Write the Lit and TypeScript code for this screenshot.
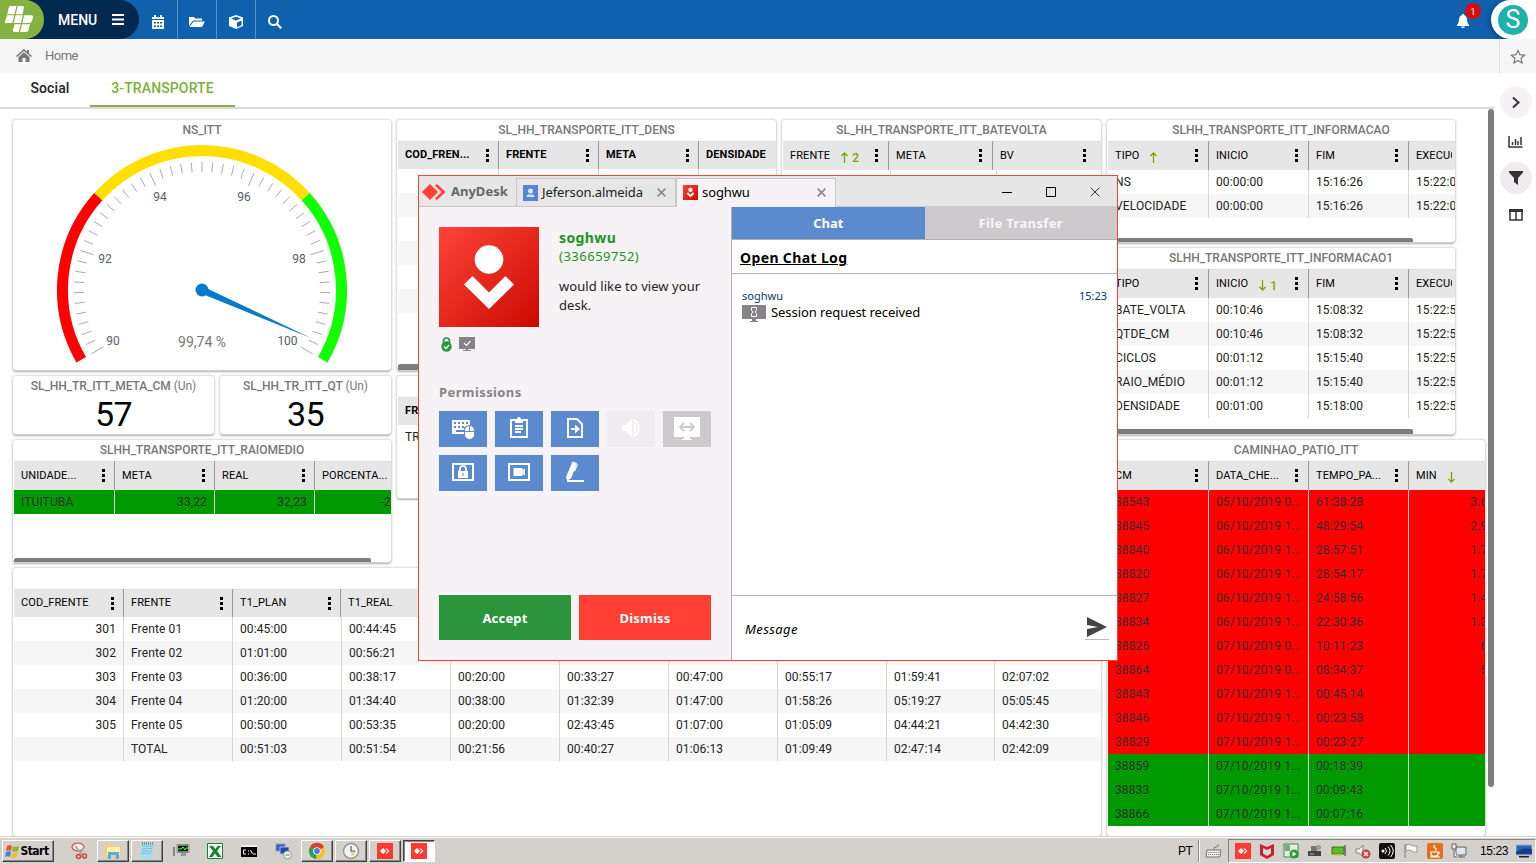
import { LitElement, html, svg, css, nothing } from "lit";
import { customElement, property } from "lit/decorators.js";
import { classMap } from "lit/directives/class-map.js";
import { styleMap } from "lit/directives/style-map.js";

interface Column {
  label: string;
  width: number;
  headWidth?: number;
  menu?: boolean;
  sort?: "up" | "down";
  order?: string;
  align?: "right";
  clip?: boolean;
}

interface Row {
  cells: string[];
  tone?: "red" | "green";
}

@customElement("data-card")
export class DataCard extends LitElement {
  @property() heading = "";
  @property({ attribute: false }) columns: Column[] = [];
  @property({ attribute: false }) rows: Row[] = [];
  @property({ type: Number }) thumb = 0;
  @property({ type: Number }) thumbHeight = 4;
  @property({ type: Number }) headHeight = 29;
  @property({ type: Number }) inset = 9;
  @property({ type: Boolean }) strong = false;

  static styles = css`
    :host {
      display: flex;
      flex-direction: column;
      background: #fff;
      border-radius: 3px;
      box-shadow: 0 0 2px 1px #d9d9d9, 0 2px 2px #aaa;
      overflow: clip;
      overflow-clip-margin: 3px;
      min-width: 0;
      font: 12px/24px Roboto, sans-serif;
      color: #222;
    }
    .heading {
      height: 21px;
      flex: none;
      line-height: 20px;
      text-align: center;
      color: #777;
      font-weight: 500;
    }
    .view {
      flex: 1;
      margin-left: 1px;
      overflow: hidden;
      display: flex;
      flex-direction: column;
    }
    .head {
      display: flex;
      flex: none;
      background: #e6e6e6;
      color: #000;
      box-shadow: inset 0 1px #dcdcdc;
      font-size: 11px;
      min-width: max-content;
    }
    .strong .head {
      font-weight: 700;
    }
    .hcell {
      box-sizing: border-box;
      flex: none;
      display: flex;
      align-items: center;
      padding: 0 9px 0 7px;
      border-left: 1px solid #999;
      white-space: nowrap;
    }
    .hcell:first-child,
    .cell:first-child {
      border-left: 0;
    }
    .label {
      letter-spacing: 0.1px;
    }
    .label.clip {
      width: 36px;
      overflow: hidden;
    }
    .sort {
      display: flex;
      align-items: center;
      color: #76a800;
      margin: 4px 0 0 11px;
      gap: 4px;
      font-size: 12px;
      font-weight: 500;
    }
    .dots {
      margin-left: auto;
      width: 3px;
      height: 13px;
      flex: none;
    }
    .row {
      display: flex;
      flex: none;
      height: 24px;
      min-width: max-content;
    }
    .row:nth-child(odd) {
      background: #f6f6f6;
    }
    .row.red {
      background: #f00;
      color: #3c2a2a;
    }
    .row.green {
      background: #090;
      color: #2b352b;
    }
    .cell {
      box-sizing: border-box;
      flex: none;
      padding: 0 7px;
      border-left: 1px solid #d6d6d6;
      white-space: nowrap;
      letter-spacing: 0.12px;
    }
    .right {
      text-align: right;
    }
    .thumb {
      flex: none;
      margin-top: auto;
      background: #7c7e7c;
      border-radius: 2px 2px 0 0;
    }
  `;

  private arrow(dir: "up" | "down") {
    return svg`<path d=${dir === "up" ? "M3.5 11V1M0.5 4L3.5 1L6.5 4" : "M3.5 0V10M0.5 7L3.5 10L6.5 7"} fill="none" stroke="#76a800" stroke-width="1.3"/>`;
  }

  render() {
    return html`
      <div class="heading">${this.heading}</div>
      <div class=${classMap({ view: true, strong: this.strong })}>
        <div class="head" style=${styleMap({ height: `${this.headHeight}px` })}>
          ${this.columns.map(
            (c) => html`<div
              class="hcell"
              style=${styleMap({ width: `${c.headWidth ?? c.width}px`, paddingRight: `${this.inset}px` })}
            >
              <span class=${classMap({ label: true, clip: !!c.clip })}>${c.label}</span>
              ${c.sort
                ? html`<span class="sort"><svg width="7" height="11">${this.arrow(c.sort)}</svg>${c.order ?? nothing}</span>`
                : nothing}
              ${c.menu === false
                ? nothing
                : html`<svg class="dots" viewBox="0 0 3 13"><path d="M0 0h3v3H0zM0 5h3v3H0zM0 10h3v3H0z" /></svg>`}
            </div>`
          )}
        </div>
        ${this.rows.map(
          (r) => html`<div class=${classMap({ row: true, red: r.tone === "red", green: r.tone === "green" })}>
            ${this.columns.map(
              (c, i) => html`<div
                class=${classMap({ cell: true, right: c.align === "right" })}
                style=${styleMap({ width: `${c.width}px` })}
              >${r.cells[i] ?? ""}</div>`
            )}
          </div>`
        )}
        ${this.thumb
          ? html`<div class="thumb" style=${styleMap({ width: `${this.thumb}px`, height: `${this.thumbHeight}px` })}></div>`
          : nothing}
      </div>
    `;
  }
}

const polar = (r: number, deg: number): [number, number] => {
  const a = (deg * Math.PI) / 180;
  return [189 + r * Math.sin(a), 170 - r * Math.cos(a)];
};

@customElement("gauge-card")
export class GaugeCard extends LitElement {
  static styles = css`
    :host {
      display: block;
      height: 250px;
      background: #fff;
      border-radius: 3px;
      box-shadow: 0 0 2px 1px #d9d9d9, 0 2px 2px #aaa;
    }
    .dial {
      display: block;
    }
    .heading {
      font: 500 12px Roboto, sans-serif;
      fill: #777;
      text-anchor: middle;
    }
    .tick {
      stroke: #a9a9b5;
      stroke-width: 1;
    }
    .num {
      font: 12px Roboto, sans-serif;
      fill: #56606b;
      text-anchor: middle;
    }
    .value {
      font: 14px Roboto, sans-serif;
      fill: #777;
      text-anchor: middle;
    }
  `;

  private arc(from: number, to: number, color: string) {
    const [x1, y1] = polar(139.5, from);
    const [x2, y2] = polar(139.5, to);
    return svg`<path d="M${x1} ${y1}A139.5 139.5 0 0 1 ${x2} ${y2}" fill="none" stroke=${color} stroke-width="11"/>`;
  }

  render() {
    const ticks = Array.from({ length: 51 }, (_, i) => {
      const deg = -120 + i * 4.8;
      const [x1, y1] = polar(128, deg);
      const [x2, y2] = polar(i % 10 === 0 ? 114 : 118, deg);
      return svg`<line class="tick" x1=${x1} y1=${y1} x2=${x2} y2=${y2}/>`;
    });
    const labels: [string, number, number][] = [
      ["90", 100, 225], ["92", 92, 143], ["94", 147, 81], ["96", 231, 81], ["98", 286, 143], ["100", 274.5, 225],
    ];
    const [tx, ty] = polar(119, 113.76);
    const [ax, ay] = polar(3.6, 23.76);
    const [bx, by] = polar(3.6, 203.76);
    return html`<svg class="dial" width="378" height="250" viewBox="0 0 378 250">
      <text class="heading" x="189" y="14">NS_ITT</text>
      ${this.arc(-120, -48, "#f00")} ${this.arc(-48, 48, "#ffdf00")} ${this.arc(48, 120, "#1f0")}
      ${ticks}
      ${labels.map(([t, x, y]) => svg`<text class="num" x=${x} y=${y}>${t}</text>`)}
      <path d="M${ax} ${ay}L${tx} ${ty}L${bx} ${by}z" fill="#067bc8" />
      <circle cx="189" cy="170" r="6.5" fill="#067bc8" />
      <text class="value" x="189" y="227">99,74 %</text>
    </svg>`;
  }
}

@customElement("remote-window")
export class RemoteWindow extends LitElement {
  static styles = css`
    :host {
      box-sizing: border-box;
      display: flex;
      flex-direction: column;
      border: 1px solid #ff4033;
      background: #f6f2f6;
      font: 13px/19px "Noto Sans", sans-serif;
      color: #222;
    }
    svg {
      display: block;
      flex: none;
    }
    .bar {
      height: 31px;
      flex: none;
      display: flex;
      align-items: flex-end;
      background: #e6e6e6;
      box-shadow: inset 0 -1px #cac8ca;
    }
    .brand {
      display: flex;
      align-items: center;
      gap: 5px;
      width: 94px;
      height: 31px;
      padding-left: 3px;
      font-weight: 700;
      color: #666;
    }
    .tab {
      box-sizing: border-box;
      height: 28px;
      display: flex;
      align-items: center;
      gap: 4px;
      border: 1px solid #c8c6c8;
      border-bottom: 0;
      padding: 0 9px 0 6px;
      color: #222;
      letter-spacing: -0.1px;
    }
    .tab.idle {
      width: 160px;
      margin-bottom: 1px;
    }
    .tab.live {
      width: 160px;
      height: 29px;
      padding-bottom: 1px;
      background: #f6f2f6;
      color: #000;
    }
    .shut {
      margin-left: auto;
    }
    .controls {
      display: flex;
      align-items: center;
      gap: 34px;
      height: 31px;
      margin-left: auto;
      padding-right: 17px;
    }
    .body {
      flex: 1;
      display: flex;
      min-height: 0;
    }
    .left {
      box-sizing: border-box;
      width: 312px;
      flex: none;
      display: flex;
      flex-direction: column;
      padding: 20px 20px 20px;
    }
    .who {
      display: flex;
      gap: 20px;
    }
    .face {
      background: linear-gradient(135deg, #ff4438, #cb0a00);
    }
    .name {
      font-size: 14px;
      font-weight: 700;
      color: #1a941a;
      margin-top: 1px;
      letter-spacing: 0.4px;
    }
    .id {
      font-size: 13px;
      color: #1a941a;
      letter-spacing: 0.5px;
    }
    .ask {
      margin-top: 11px;
      width: 152px;
      letter-spacing: 0.07px;
    }
    .marks {
      display: flex;
      gap: 7px;
      margin: 9px 0 0 2px;
      align-items: center;
      height: 16px;
    }
    .caption {
      margin-top: 30px;
      line-height: 20px;
      font-weight: 700;
      color: #868386;
      letter-spacing: 0.4px;
    }
    .perms {
      margin-top: 9px;
      display: grid;
      grid-template-columns: repeat(5, 48px);
      gap: 8px;
    }
    .perm {
      height: 36px;
      background: #5b8bce;
    }
    .perm.off {
      background: #efebef;
    }
    .perm.gray {
      background: #cccacd;
    }
    .actions {
      margin-top: auto;
      display: flex;
      gap: 8px;
      height: 45px;
    }
    .action {
      flex: 1;
      background: #2a953b;
      color: #fff;
      font-weight: 700;
      line-height: 46px;
      text-align: center;
      letter-spacing: 0.2px;
    }
    .action.no {
      background: #ff4033;
    }
    .chat {
      flex: 1;
      display: flex;
      flex-direction: column;
      border-left: 1px solid #b2b2b2;
      background: #fff;
      color: #000;
    }
    .switch {
      display: flex;
      height: 32px;
      border-bottom: 1px solid #b2b2b2;
      line-height: 32px;
      font-weight: 700;
      text-align: center;
      color: #fff;
    }
    .switch div {
      flex: 1;
      background: #5b8bce;
    }
    .switch .other {
      background: #cccacd;
      color: #f7f5f7;
      letter-spacing: 0.35px;
    }
    .log {
      height: 33px;
      border-bottom: 1px solid #b2b2b2;
      padding-left: 8px;
      line-height: 36px;
      font-size: 14px;
      font-weight: 700;
      text-decoration: underline;
      letter-spacing: 0.37px;
    }
    .meta {
      display: flex;
      justify-content: space-between;
      padding: 14px 10px 0;
      font-size: 11px;
      line-height: 16px;
      color: #043c74;
    }
    .entry {
      display: flex;
      align-items: flex-start;
      gap: 5px;
      padding-left: 10px;
      height: 18px;
      line-height: 17px;
      letter-spacing: -0.07px;
    }
    .entry svg {
      margin-top: 1px;
    }
    .compose {
      margin-top: auto;
      height: 64px;
      flex: none;
      border-top: 1px solid #b2b2b2;
      display: flex;
      align-items: center;
      justify-content: space-between;
      padding: 0 8px 0 13px;
      font-style: italic;
      letter-spacing: 0.4px;
    }
    .compose span {
      padding-top: 2px;
    }
  `;

  private cross(size: number, color: string, w: number) {
    return html`<svg class="shut" width=${size} height=${size} viewBox="0 0 10 10">
      <path d="M.7.7l8.6 8.6M9.3.7L.7 9.3" stroke=${color} stroke-width=${w} />
    </svg>`;
  }

  private permIcons() {
    return [
      ["", svg`<path d="M13 9h18v6h-4a4 4 0 0 0-2 2v6H13z" fill="#fff"/><path d="M15 11h2v2h-2zM19 11h2v2h-2zM23 11h2v2h-2zM27 11h2v2h-2zM15 15h2v2h-2zM19 15h2v2h-2zM23 15h2v2h-2zM17 19h8v2h-8z" fill="#5b8bce"/><rect x="25.5" y="14.5" width="10" height="14" rx="5" fill="#fff" stroke="#5b8bce"/><path d="M26 20.5h9M30.500 15v5" stroke="#5b8bce"/>`],
      ["", svg`<path d="M16 9h16v17H16z" fill="none" stroke="#fff" stroke-width="2"/><path d="M20 8h2a2 2 0 0 1 4 0h2v4h-8z" fill="#fff"/><path d="M20 15h8M20 18h8M20 21h6" stroke="#fff" stroke-width="2"/>`],
      ["", svg`<path d="M17 8h9l5 5v13H17z" fill="none" stroke="#fff" stroke-width="2"/><path d="M20 18h5" stroke="#fff" stroke-width="2"/><path d="M24 13.500l5 4.500-5 4.500z" fill="#fff"/>`],
      ["off", svg`<path d="M15 14h4l6-6v18l-6-6h-4z" fill="#fff"/><path d="M26.500 11v12q3-2.500 3-6t-3-6z" fill="#fff"/><path d="M26 9c7.500 2 7.500 14 0 16" fill="none" stroke="#fff" stroke-width="2"/>`],
      ["gray", svg`<path d="M11 6h26v20H11z" fill="#fff"/><path d="M21 26h6v2h2v1H19v-1h2z" fill="#fff"/><path d="M17 16h14M21 12l-4 4 4 4M27 12l4 4-4 4" fill="none" stroke="#cccacd" stroke-width="1.8"/>`],
      ["", svg`<path d="M14 9h20v16H14z" fill="none" stroke="#fff" stroke-width="2"/><path d="M19 16h10v7H19z" fill="#fff"/><path d="M21 17v-3a3 3 0 0 1 6 0v3" fill="none" stroke="#fff" stroke-width="1.700"/><path d="M24 18v3" stroke="#5b8bce"/>`],
      ["", svg`<path d="M14 9h20v16H14z" fill="none" stroke="#fff" stroke-width="2"/><path d="M18.500 13h9v2l2.500-1.500v7L27.500 19v2h-9z" fill="#fff"/>`],
      ["", svg`<path d="M16 26h17" stroke="#fff" stroke-width="2"/><path d="M21.500 6.500l4.500 1.500-6 15.500-4 2-1-3.500zM26 9l1 .5-3 7-1-.5z" fill="#fff"/>`],
    ] as const;
  }

  private portrait(size: number) {
    return html`<svg class="face" width=${size} height=${size} viewBox="0 0 100 100">
      <circle cx="50" cy="32.500" r="14.300" fill="#fff" />
      <path d="M33.500 49L50 65.500 66.500 49 75 57.500 50 82 25 57.500z" fill="#fff" />
    </svg>`;
  }

  render() {
    return html`
      <div class="bar">
        <div class="brand">
          <svg width="24" height="16" viewBox="0 0 24 16"><path d="M8 0l8 8-8 8-8-8zM13 1.500L15 0l8.500 8-8.500 8-2-1.500L19.500 8z" fill="#ff4033" /></svg>
          <span>AnyDesk</span>
        </div>
        <div class="tab idle">
          <svg width="15" height="16" viewBox="0 0 15 16"><path d="M0 0h15v16H0z" fill="#5b82d6" /><circle cx="7.500" cy="6" r="2.500" fill="#dbe5f5" /><path d="M3.500 12q0-2.500 2-2.500h4q2 0 2 2.500z" fill="#dbe5f5" /></svg>
          <span>Jeferson.almeida</span>${this.cross(9, "#868686", 1.6)}
        </div>
        <div class="tab live">${this.portrait(15)}<span>soghwu</span>${this.cross(9, "#868686", 1.6)}</div>
        <div class="controls">
          <svg width="10" height="11"><path d="M0 6.500h10" stroke="#000" /></svg>
          <svg width="10" height="10"><path d="M.5.5h9v9h-9z" fill="none" stroke="#000" /></svg>
          ${this.cross(10, "#333", 1)}
        </div>
      </div>
      <div class="body">
        <div class="left">
          <div class="who">
            ${this.portrait(100)}
            <div>
              <div class="name">soghwu</div>
              <div class="id">(336659752)</div>
              <div class="ask">would like to view your desk.</div>
            </div>
          </div>
          <div class="marks">
            <svg width="11" height="15" viewBox="0 0 11 15"><path d="M2.500 6V4a3 3 0 0 1 6 0v2" fill="none" stroke="#2a953b" stroke-width="1.700" /><circle cx="5.500" cy="9.500" r="5.200" fill="#2a953b" /><path d="M3 9.500l2 2 3-3.500" fill="none" stroke="#fff" stroke-width="1.300" /></svg>
            <svg width="16" height="14" viewBox="0 0 16 14"><path d="M0 0h16v12h-7v1h3v1H4v-1h3v-1H0z" fill="#868386" /><path d="M5 6l2.500 2.500L11.500 4" fill="none" stroke="#fff" stroke-width="1.200" /></svg>
          </div>
          <div class="caption">Permissions</div>
          <div class="perms">
            ${this.permIcons().map(([tone, art]) => html`<svg class="perm ${tone}" width="48" height="36" viewBox="0 0 48 36">${art}</svg>`)}
          </div>
          <div class="actions">
            <div class="action">Accept</div>
            <div class="action no">Dismiss</div>
          </div>
        </div>
        <div class="chat">
          <div class="switch"><div>Chat</div><div class="other">File Transfer</div></div>
          <div class="log">Open Chat Log</div>
          <div class="meta"><span>soghwu</span><span>15:23</span></div>
          <div class="entry">
            <svg width="24" height="17" viewBox="0 0 24 17"><path d="M0 0h24v14h-10v2h2v1H8v-1h2v-2H0z" fill="#868386" /><path d="M9.500 2.500h5v3l-1.500 1.500 1.500 1.500v3h-5v-3l1.500-1.500-1.500-1.500z" fill="none" stroke="#fff" /></svg>
            <span>Session request received</span>
          </div>
          <div class="compose">
            <span>Message</span>
            <svg width="24" height="24" viewBox="0 0 24 24"><path d="M2 1l20 10L2 21v-8l11-2L2 9z" fill="#444" /><path d="M0 23.500h24" stroke="#bbb" /></svg>
          </div>
        </div>
      </div>
    `;
  }
}

const cols100 = (labels: string[]): Column[] => labels.map((label) => ({ label, width: 100 }));

const infoColumns = (tipo: Partial<Column>, inicio: Partial<Column>): Column[] => [
  { label: "TIPO", width: 100, ...tipo },
  { label: "INICIO", width: 100, ...inicio },
  { label: "FIM", width: 100 },
  { label: "EXECUCAO", width: 100, menu: false, clip: true },
];

const yard: [string, string, string, string, boolean][] = [
  ["38543", "05/10/2019 0...", "61:38:28", "3.698", true],
  ["38845", "06/10/2019 1...", "48:29:54", "2.909", true],
  ["38840", "06/10/2019 1...", "28:57:51", "1.737", true],
  ["38820", "06/10/2019 1...", "28:54:17", "1.734", true],
  ["38827", "06/10/2019 1...", "24:58:56", "1.498", true],
  ["38834", "06/10/2019 1...", "22:30:36", "1.350", true],
  ["38826", "07/10/2019 0...", "10:11:23", "611", true],
  ["38864", "07/10/2019 0...", "08:34:37", "514", true],
  ["38843", "07/10/2019 1...", "00:45:14", "", true],
  ["38846", "07/10/2019 1...", "00:23:58", "", true],
  ["38829", "07/10/2019 1...", "00:23:27", "", true],
  ["38859", "07/10/2019 1...", "00:18:39", "", false],
  ["38833", "07/10/2019 1...", "00:09:43", "", false],
  ["38866", "07/10/2019 1...", "00:07:16", "", false],
];

@customElement("app-root")
export class AppRoot extends LitElement {
  static styles = css`
    :host {
      position: relative;
      display: flex;
      flex-direction: column;
      width: 1536px;
      height: 864px;
      overflow: hidden;
      background: #fff;
      font: 14px Roboto, sans-serif;
      color: #333;
    }
    svg {
      display: block;
      flex: none;
    }
    .top {
      height: 39px;
      flex: none;
      display: flex;
      background: #0f60ad;
    }
    .menu {
      width: 139px;
      display: flex;
      align-items: center;
      background: #00294f;
      border-radius: 0 20px 20px 0;
      color: #fff;
      font-weight: 500;
    }
    .logo {
      width: 44px;
      height: 39px;
      background: #84b13f;
      border-radius: 0 19px 19px 0;
      margin-right: 14px;
    }
    .burger {
      margin-left: 15px;
    }
    .tool {
      box-sizing: border-box;
      width: 39px;
      padding-top: 4px;
      display: grid;
      place-items: center;
      border-right: 1px solid #5b91c5;
    }
    .tool.end {
      border-right-color: transparent;
    }
    .alerts {
      position: relative;
      margin-left: auto;
      width: 34px;
      padding: 14px 0 0;
    }
    .badge {
      position: absolute;
      left: 8px;
      top: 3px;
      width: 16px;
      height: 16px;
      border-radius: 50%;
      background: #dd0b0f;
      color: #fff;
      font-size: 9px;
      line-height: 18px;
      text-align: center;
    }
    .user {
      width: 45px;
      height: 39px;
      background: #fff;
      border-radius: 20px 0 0 20px;
      box-shadow: -1px 1px 5px rgba(0, 0, 0, 0.35);
      display: flex;
      align-items: center;
    }
    .initial {
      width: 30px;
      height: 30px;
      margin-left: 7px;
      border-radius: 50%;
      background: #20b2aa;
      color: #fff;
      font-size: 25px;
      line-height: 29px;
      text-align: center;
    }
    .crumbs {
      height: 34px;
      flex: none;
      display: flex;
      align-items: center;
      background: #f6f6f6;
      color: #777;
      font-size: 13px;
      padding-left: 16px;
    }
    .crumbs svg {
      margin-bottom: 1px;
    }
    .crumbs span {
      margin: 0 0 1px 13px;
      letter-spacing: -0.5px;
    }
    .star {
      margin-left: auto;
      box-sizing: border-box;
      width: 37px;
      height: 34px;
      border-left: 1px solid #ddd;
      padding: 10px 0 0 10px;
    }
    .main {
      flex: 1;
      display: flex;
      min-height: 0;
    }
    .content {
      width: 1494px;
      flex: none;
      display: flex;
      flex-direction: column;
      overflow: hidden;
    }
    .tabs {
      height: 34px;
      flex: none;
      display: flex;
      border-bottom: 2px solid #dbdbdb;
      padding-left: 10px;
      line-height: 31px;
      font-weight: 500;
      letter-spacing: 0.12px;
    }
    .tab {
      width: 80px;
      text-align: center;
      color: #222;
    }
    .tab.on {
      width: 145px;
      height: 32px;
      color: #7cb03c;
      border-bottom: 2px solid #84b13f;
    }
    .scroll {
      flex: 1;
      display: flex;
      min-height: 0;
    }
    .board {
      flex: 1;
      display: flex;
      gap: 6px;
      padding: 11px 3px 0 13px;
      overflow: hidden;
    }
    .rail {
      width: 6px;
      height: 678px;
      border-radius: 3px;
      background: #7c7e7c;
    }
    .wide {
      width: 1088px;
      flex: none;
      display: flex;
      flex-direction: column;
      gap: 6px;
    }
    .upper {
      display: flex;
      gap: 6px;
      height: 442px;
    }
    .stack {
      display: flex;
      flex-direction: column;
      gap: 6px;
    }
    .first {
      width: 378px;
    }
    .second {
      width: 379px;
    }
    .third {
      width: 319px;
    }
    .last {
      width: 378px;
    }
    .kpis {
      display: flex;
      gap: 6px;
      height: 58px;
    }
    .kpi {
      flex: 201 1 0;
      background: #fff;
      border-radius: 3px;
      box-shadow: 0 0 2px 1px #d9d9d9, 0 2px 2px #aaa;
      text-align: center;
      color: #777;
      font-size: 12px;
      font-weight: 500;
      line-height: 20px;
      letter-spacing: -0.05px;
    }
    .kpi.narrow {
      flex: 171 1 0;
    }
    .unit {
      font-weight: 400;
    }
    .figure {
      font-size: 34px;
      font-weight: 400;
      line-height: 37px;
      letter-spacing: -0.5px;
      color: #000;
    }
    .h250 {
      height: 250px;
    }
    .h122 {
      height: 122px;
    }
    .h186 {
      height: 186px;
    }
    .grow {
      flex: 1;
    }
    .w348 {
      width: 348px;
    }
    .side {
      flex: 1;
      display: flex;
      flex-direction: column;
      align-items: center;
      padding: 13px 0 0 1px;
    }
    .round {
      width: 32px;
      height: 32px;
      border-radius: 50%;
      background: #f6f2f6;
      display: grid;
      place-items: center;
    }
    .round.active {
      background: #efebef;
      margin: 14px 0 15px;
    }
    .chart {
      margin-top: 18px;
    }
    .remote {
      position: absolute;
      left: 418px;
      top: 175px;
      width: 700px;
      height: 486px;
    }
    .taskbar {
      position: relative;
      height: 28px;
      flex: none;
      display: flex;
      align-items: center;
      box-sizing: border-box;
      padding: 2px 0 0 2px;
      gap: 2px;
      background: #d4d0cc;
      box-shadow: inset 0 1px #d4d0cc, inset 0 2px #fff;
      color: #000;
      font: 12px "Liberation Sans", sans-serif;
    }
    .start,
    .task {
      box-sizing: border-box;
      height: 22px;
      width: 32px;
      display: flex;
      align-items: center;
      justify-content: center;
    }
    .start {
      width: 52px;
      margin-right: 7px;
      padding-right: 2px;
      font: 700 12px "DejaVu Sans Condensed", "DejaVu Sans", sans-serif;
      letter-spacing: -0.5px;
    }
    .raised {
      border: 1px solid;
      border-color: #fff #404040 #404040 #fff;
      box-shadow: inset -1px -1px #8a8784;
    }
    .pressed {
      background: #fff;
      border: 1px solid;
      border-color: #404040 #fff #fff #404040;
      box-shadow: inset 1px 1px #8a8784;
    }
    .lang {
      margin-left: auto;
      width: 18px;
      letter-spacing: -0.5px;
    }
    .keys {
      box-sizing: border-box;
      width: 28px;
      height: 22px;
      padding-right: 10px;
      display: flex;
      align-items: center;
      justify-content: flex-end;
      padding-right: 4px;
      border-left: 1px solid #8a8784;
      box-shadow: inset 1px 0 #fff;
    }
    .tray {
      box-sizing: border-box;
      width: 308px;
      height: 24px;
      display: flex;
      align-items: center;
      gap: 8px;
      padding-left: 6px;
      border: 1px solid;
      border-color: #8a8784 #fff #fff #8a8784;
    }
    .clock {
      margin-left: 5px;
      width: 28px;
      letter-spacing: -0.4px;
    }
  `;

  private anydesk(size: number) {
    return html`<svg width=${size} height=${size} viewBox="0 0 16 16"><path d="M0 0h16v16H0z" fill="#ff3a30" /><path d="M6 5l3 3-3 3-3-3zM8.500 5.700l.8-.7 3.200 3-3.200 3-.8-.7L10.800 8z" fill="#fff" /></svg>`;
  }

  private taskIcons() {
    const box = (art: unknown) => html`<svg width="18" height="18" viewBox="0 0 18 18">${art}</svg>`;
    return [
      ["", box(svg`<ellipse cx="8" cy="5" rx="6" ry="4" fill="#f3ece9" stroke="#c9443a" stroke-width="1.100"/><path d="M5 4l8 9M14 5l-5 8" stroke="#9aa7b5" stroke-width="1.600"/><circle cx="8.500" cy="14.500" r="2" fill="none" stroke="#c9443a" stroke-width="1.500"/><circle cx="14.500" cy="14" r="2" fill="none" stroke="#c9443a" stroke-width="1.500"/>`)],
      ["raised", box(svg`<path d="M1 2h6l1 2h9v11H1z" fill="#f1cf6b"/><path d="M3 5h13v8H3z" fill="#fff1b4"/><path d="M4 10h11v7h-3v-4H7v4H4z" fill="#62a9de"/>`)],
      ["raised", box(svg`<path d="M4 2h12l-2 15H2z" fill="#a6dcec"/><path d="M4 4h11M4 6.500h10M4 9h10M3 11.500h10" stroke="#6fb3cc" stroke-width=".7"/><path d="M4 1.500h12" stroke="#777" stroke-dasharray="1 1" stroke-width="2"/>`)],
      ["", box(svg`<path d="M5 2.500h12v8H5z" fill="#ddd" stroke="#888"/><path d="M6 3.500h10v6H6z" fill="#052405"/><path d="M6 7h3l2-2 2 3 1-2h2" fill="none" stroke="#4f5"/><path d="M9 11h5v3H9z" fill="#999"/><path d="M1 5h2v9H1z" fill="#7c8b90"/>`)],
      ["", box(svg`<path d="M1.500 1.500h15v15h-15z" fill="#f4fbf3" stroke="#168334"/><path d="M3 4h4l2.500 3 2-3H15l-4 5 4.500 6H11.500l-2.500-3.500L6.500 15H3l4-6z" fill="#168334"/>`)],
      ["", box(svg`<path d="M1 3h16v12H1z" fill="#eee"/><path d="M1 5h16v10H1z" fill="#000"/><path d="M6 8H3.500v4H6M8 9h1M8 12h1M10.500 8l2 4M13 12h3" fill="none" stroke="#fff"/>`)],
      ["", box(svg`<path d="M2 2h9v7H2z" fill="#315fc6" stroke="#99a"/><path d="M6 5h9v7H6z" fill="#2548b4" stroke="#bbc"/><circle cx="13.500" cy="13" r="4" fill="#eef2e6" stroke="#999"/><path d="M11.500 14l2-2M13.500 14l2-2" stroke="#3a8d31"/>`)],
      ["raised", box(svg`<circle cx="9" cy="9" r="8" fill="#fbc116"/><path d="M9 9L2 5A8 8 0 0 1 16 5z" fill="#e33b2e"/><path d="M9 9L2 5a8 8 0 0 0 6 12z" fill="#2ba24c"/><circle cx="9" cy="9" r="3.800" fill="#fff"/><circle cx="9" cy="9" r="2.900" fill="#3f7de8"/>`)],
      ["raised", box(svg`<circle cx="9" cy="9" r="7.500" fill="#edf3f8" stroke="#8d9399" stroke-width="1.500"/><path d="M9 9h5a5 5 0 0 1-5 5z" fill="#f3d58a"/><path d="M9 4v5h4" fill="none" stroke="#4b5c6c" stroke-width="1.200"/>`)],
      ["raised", this.anydesk(16)],
      ["pressed", this.anydesk(16)],
    ] as const;
  }

  private trayIcons() {
    const box = (art: unknown) => html`<svg width="16" height="16" viewBox="0 0 16 16">${art}</svg>`;
    return [
      this.anydesk(16),
      box(svg`<path d="M1 1l7 3 7-3v11l-7 4-7-4z" fill="#c8202f"/><path d="M4 5l4 2 4-2v5.500l-4 2.500-4-2.500z" fill="#dad6d2"/>`),
      box(svg`<path d="M1 1h14v13H1z" fill="#e5efe4" stroke="#3b8a46"/><path d="M2 2h5v6H2z" fill="#79a87c"/><circle cx="11" cy="11" r="4.500" fill="#2b9b3b"/><path d="M9.500 8.500l4 2.500-4 2.500z" fill="#fff"/>`),
      box(svg`<path d="M4 3h6v5H4z" fill="#777"/><path d="M1 8h13v5H1z" fill="#444"/><path d="M3 11h4" stroke="#bbb"/><circle cx="11.500" cy="4.500" r="2.500" fill="#999"/>`),
      box(svg`<path d="M1 4h12v7H1z" fill="#5dbb2f" stroke="#317d15"/><path d="M3 11h7v2H3z" fill="#e0bf33"/><path d="M14 2v11" stroke="#666" stroke-width="1.500"/>`),
      box(svg`<path d="M1 6h3l4-4v12L4 10H1z" fill="#eee" stroke="#888"/><circle cx="11" cy="11" r="4.500" fill="#d53a32"/><path d="M9 9l4 4M13 9l-4 4" stroke="#fff" stroke-width="1.400"/>`),
      box(svg`<rect width="16" height="16" rx="2" fill="#111"/><circle cx="4" cy="8" r="1.500" fill="#fff"/><path d="M6 5q3 3 0 6M9 3.500q4 4.500 0 9M11.500 2q5.500 6 0 12" fill="none" stroke="#fff"/>`),
      box(svg`<path d="M2 1v14" stroke="#999" stroke-width="1.500"/><path d="M3 2q3-1.500 5 0t6 1v6q-3 1-5-1t-6 0z" fill="#f6f6f6" stroke="#999"/>`),
      box(svg`<rect width="16" height="16" rx="2" fill="#e2701c"/><path d="M4 9h7v2q0 2-2 2H6q-2 0-2-2zM11 9q2.500 0 0 2.500M8 2q-2.500 2.500 0 3t0 2.500M3 14h10" fill="none" stroke="#fff" stroke-width="1.200"/>`),
      box(svg`<path d="M5 4h10v8H5z" fill="#dfe5ea" stroke="#666"/><path d="M7 14h7M10 12v2" stroke="#666"/><path d="M1 1h4v5H1zM3 6v8h3" fill="#eee" stroke="#666"/>`),
    ];
  }

  render() {
    return html`
      <div class="top">
        <div class="menu">
          <svg class="logo" width="44" height="39" viewBox="0 0 44 39">
            <g fill="#fff">
              <path d="M10.500 6h6l-2 8.300H7.300l1.300-6.300q.4-2 1.900-2zM17.800 6h4.700q2 0 1.500 2l-1.500 6.300h-6.700z" />
              <path d="M7 15.300h7.300l-2 7.700H5q-.3 0 0-1zM15.600 15.300h7.300l-2 7.700h-7.300zM24.200 15.300h7.300q2 0 1.600 1.500l-1 4q-.7 2.200-2.600 2.200h-7.300z" />
              <path d="M14.300 24.200h6.400l-2 7.800h-4.200q-2 0-1.500-2zM22 24.200h8l-1.500 5.800q-.6 2-2.500 2h-6z" />
            </g>
          </svg>
          <span>MENU</span>
          <svg class="burger" width="12" height="11"><path d="M0 1h12M0 5.500h12M0 10h12" stroke="#fff" stroke-width="2" /></svg>
        </div>
        <div class="tool"><svg width="12" height="14" viewBox="0 0 12 14"><path d="M0 2h2V0h2v2h4V0h2v2h2v2H0zM0 5h12v9H0z" fill="#fff" /><path d="M2 7h2v1.500H2zM5 7h2v1.500H5zM8 7h2v1.500H8zM2 10.500h2V12H2zM5 10.500h2V12H5zM8 10.500h2V12H8z" fill="#0f60ad" /></svg></div>
        <div class="tool"><svg width="16" height="12" viewBox="0 0 16 12"><path d="M0 1h5l1.500 1.500H13v2H4L0 10zM4.500 5.500H16L13 11H.5z" fill="#fff" /></svg></div>
        <div class="tool"><svg width="14" height="14" viewBox="0 0 14 14"><path d="M7 0l7 2.500v8.500L7 14 0 11V2.500z" fill="#fff" /><path d="M2 3.500L7 1.700l5 1.800-5 2zM8 7.500l4.500-2v4.700L8 12.200z" fill="#0f60ad" /></svg></div>
        <div class="tool end"><svg width="14" height="14" viewBox="0 0 14 14"><circle cx="5.500" cy="5.500" r="4.500" fill="none" stroke="#fff" stroke-width="2" /><path d="M9 9l4.300 4.300" stroke="#fff" stroke-width="2.200" /></svg></div>
        <div class="alerts">
          <svg width="12" height="14" viewBox="0 0 12 14"><path d="M5 0h2v1q3 1 3 4.500T12 11v1H0v-1q2-2 2-5.500T5 1zM4 12.500h4Q7.500 14 6 14t-2-1.500z" fill="#fff" /></svg>
          <span class="badge">1</span>
        </div>
        <div class="user"><div class="initial">S</div></div>
      </div>
      <div class="crumbs">
        <svg width="16" height="13" viewBox="0 0 16 13"><path d="M8 0l3 2.600V1h2v3.500L16 7l-1 1-7-6-7 6-1-1zM8 3.300l5.500 4.700V13H9.500V9h-3v4h-4V8z" fill="#777" /></svg>
        <span>Home</span>
        <div class="star"><svg width="16" height="16" viewBox="0 0 16 16"><path d="M8 1.500l1.900 4.200 4.600.5-3.400 3.100.9 4.700L8 11.500 4 14l.9-4.700L1.500 6.200l4.600-.5z" fill="none" stroke="#777" stroke-width="1.200" /></svg></div>
      </div>
      <div class="main">
        <div class="content">
          <div class="tabs"><div class="tab">Social</div><div class="tab on">3-TRANSPORTE</div></div>
          <div class="scroll">
            <div class="board">
              <div class="wide">
                <div class="upper">
                  <div class="stack first">
                    <gauge-card></gauge-card>
                    <div class="kpis">
                      <div class="kpi">SL_HH_TR_ITT_META_CM <span class="unit">(Un)</span><div class="figure">57</div></div>
                      <div class="kpi narrow">SL_HH_TR_ITT_QT <span class="unit">(Un)</span><div class="figure">35</div></div>
                    </div>
                    <data-card
                      class="h122"
                      heading="SLHH_TRANSPORTE_ITT_RAIOMEDIO"
                      .thumb=${357}
                      .columns=${[
                        { label: "UNIDADE...", width: 100 },
                        { label: "META", width: 100, align: "right" },
                        { label: "REAL", width: 100, align: "right" },
                        { label: "PORCENTA...", width: 100, align: "right", menu: false },
                      ] as Column[]}
                      .rows=${[{ cells: ["ITUITUBA", "33,22", "32,23", "-2,98"], tone: "green" }] as Row[]}
                    ></data-card>
                  </div>
                  <div class="stack second">
                    <data-card
                      class="h250"
                      heading="SL_HH_TRANSPORTE_ITT_DENS"
                      strong
                      .headHeight=${28}
                      .thumb=${300}
                      .thumbHeight=${6}
                      .columns=${[...cols100(["COD_FREN...", "FRENTE", "META"]), { label: "DENSIDADE", width: 100, menu: false }]}
                      .rows=${Array.from({ length: 6 }, () => ({ cells: [] }))}
                    ></data-card>
                    <data-card
                      class="h122"
                      strong
                      .headHeight=${28}
                      .columns=${[{ label: "FRENTE", width: 190 }, { label: "META", width: 190 }]}
                      .rows=${[{ cells: ["TRANSPORTE", ""] }]}
                    ></data-card>
                  </div>
                  <div class="stack third">
                    <data-card
                      class="grow"
                      heading="SL_HH_TRANSPORTE_ITT_BATEVOLTA"
                      .inset=${10}
                      .columns=${[
                        { label: "FRENTE", width: 107, headWidth: 105, sort: "up", order: "2" },
                        { label: "META", width: 106, headWidth: 104 },
                        { label: "BV", width: 106, headWidth: 104 },
                      ] as Column[]}
                      .rows=${[{ cells: [] }]}
                    ></data-card>
                  </div>
                </div>
                <data-card
                  class="grow"
                  .headHeight=${28}
                  .columns=${[
                    { label: "COD_FRENTE", width: 109, align: "right" },
                    { label: "FRENTE", width: 109 },
                    { label: "T1_PLAN", width: 109, headWidth: 108 },
                    { label: "T1_REAL", width: 109 },
                    ...["T2_PLAN", "T2_REAL", "T3_PLAN", "T3_REAL"].map((label) => ({ label, width: 109 })),
                    { label: "CICLO_PLAN", width: 108 },
                    { label: "CICLO_REAL", width: 109 },
                  ] as Column[]}
                  .rows=${[
                    { cells: ["301", "Frente 01", "00:45:00", "00:44:45"] },
                    { cells: ["302", "Frente 02", "01:01:00", "00:56:21"] },
                    { cells: ["303", "Frente 03", "00:36:00", "00:38:17", "00:20:00", "00:33:27", "00:47:00", "00:55:17", "01:59:41", "02:07:02"] },
                    { cells: ["304", "Frente 04", "01:20:00", "01:34:40", "00:38:00", "01:32:39", "01:47:00", "01:58:26", "05:19:27", "05:05:45"] },
                    { cells: ["305", "Frente 05", "00:50:00", "00:53:35", "00:20:00", "02:43:45", "01:07:00", "01:05:09", "04:44:21", "04:42:30"] },
                    { cells: ["", "TOTAL", "00:51:03", "00:51:54", "00:21:56", "00:40:27", "01:06:13", "01:09:49", "02:47:14", "02:42:09"] },
                  ]}
                ></data-card>
              </div>
              <div class="stack last">
                <data-card
                  class="h122 w348"
                  heading="SLHH_TRANSPORTE_ITT_INFORMACAO"
                  .inset=${10}
                  .thumb=${305}
                  .columns=${infoColumns({ sort: "up" }, {})}
                  .rows=${[
                    { cells: ["NS", "00:00:00", "15:16:26", "15:22:00"] },
                    { cells: ["VELOCIDADE", "00:00:00", "15:16:26", "15:22:00"] },
                  ]}
                ></data-card>
                <data-card
                  class="h186 w348"
                  heading="SLHH_TRANSPORTE_ITT_INFORMACAO1"
                  .inset=${10}
                  .thumb=${305}
                  .thumbHeight=${5}
                  .columns=${infoColumns({}, { sort: "down", order: "1" })}
                  .rows=${[
                    { cells: ["BATE_VOLTA", "00:10:46", "15:08:32", "15:22:52"] },
                    { cells: ["QTDE_CM", "00:10:46", "15:08:32", "15:22:52"] },
                    { cells: ["CICLOS", "00:01:12", "15:15:40", "15:22:52"] },
                    { cells: ["RAIO_MÉDIO", "00:01:12", "15:15:40", "15:22:52"] },
                    { cells: ["DENSIDADE", "00:01:00", "15:18:00", "15:22:52"] },
                  ]}
                ></data-card>
                <data-card
                  class="grow"
                  heading="CAMINHAO_PATIO_ITT"
                  .inset=${10}
                  .columns=${[
                    ...cols100(["CM", "DATA_CHE...", "TEMPO_PA..."]),
                    { label: "MIN", width: 100, sort: "down", align: "right", menu: false },
                  ] as Column[]}
                  .rows=${yard.map(([a, b, c, d, late]) => ({ cells: [a, b, c, d], tone: late ? "red" : "green" }))}
                ></data-card>
              </div>
            </div>
            <div class="rail"></div>
          </div>
        </div>
        <div class="side">
          <div class="round"><svg width="10" height="13" viewBox="0 0 10 13"><path d="M2 1.500l5.500 5L2 11.500" fill="none" stroke="#333" stroke-width="2" /></svg></div>
          <svg class="chart" width="15" height="12" viewBox="0 0 15 12"><path d="M1 0v11h13.500" fill="none" stroke="#333" stroke-width="1.500" /><path d="M4.500 9V6M7.500 9V3M10 9V5M13 9V1" stroke="#333" stroke-width="1.500" /></svg>
          <div class="round active"><svg width="14" height="14" viewBox="0 0 14 14"><path d="M0 0h14v1.500L9 7v7l-4-3V7L0 1.500z" fill="#333" /></svg></div>
          <svg width="14" height="12" viewBox="0 0 14 12"><path d="M1 1.500h12V11H1zM7 1v10" fill="none" stroke="#333" stroke-width="1.500" /><path d="M0 1.500h14" stroke="#333" stroke-width="3" /></svg>
        </div>
      </div>
      <div class="taskbar">
        <div class="start raised">
          <svg width="15" height="15" viewBox="0 0 15 15"><path d="M2 2q3-1.500 5 0L6 7Q4 5.500 1 7z" fill="#e4552a" /><path d="M8 2.500q3 1 6-.5l-1 5q-3 1.500-6 .3z" fill="#7cb93b" /><path d="M1 8q3-1.500 5 0l-1 5q-2-1.500-5 0z" fill="#3f86d6" /><path d="M7 8.500q3 1 6-.5l-1 5q-3 1.500-6 .3z" fill="#f3bd2e" /></svg>
          <span>Start</span>
        </div>
        ${this.taskIcons().map(([state, icon]) => html`<div class="task ${state}">${icon}</div>`)}
        <div class="lang">PT</div>
        <div class="keys"><svg width="17" height="16" viewBox="0 0 17 16"><path d="M2 7h14l-1 7H1zM9 7q-1-3 2-3t2-3" fill="#eee" stroke="#777" /><path d="M3.500 9.500h11M3 11.500h11" stroke="#777" stroke-dasharray="1 1" /></svg></div>
        <div class="tray">
          ${this.trayIcons()}
          <span class="clock">15:23</span>
          <svg width="16" height="14" viewBox="0 0 16 14"><path d="M0 1h16v10H0z" fill="#2467b8" stroke="#aac" /><path d="M0 8q8-5 16-3v5H0z" fill="#163c86" /><path d="M3 12h10v1.500H3z" fill="#222" /></svg>
        </div>
      </div>
      <remote-window class="remote"></remote-window>
    `;
  }
}
